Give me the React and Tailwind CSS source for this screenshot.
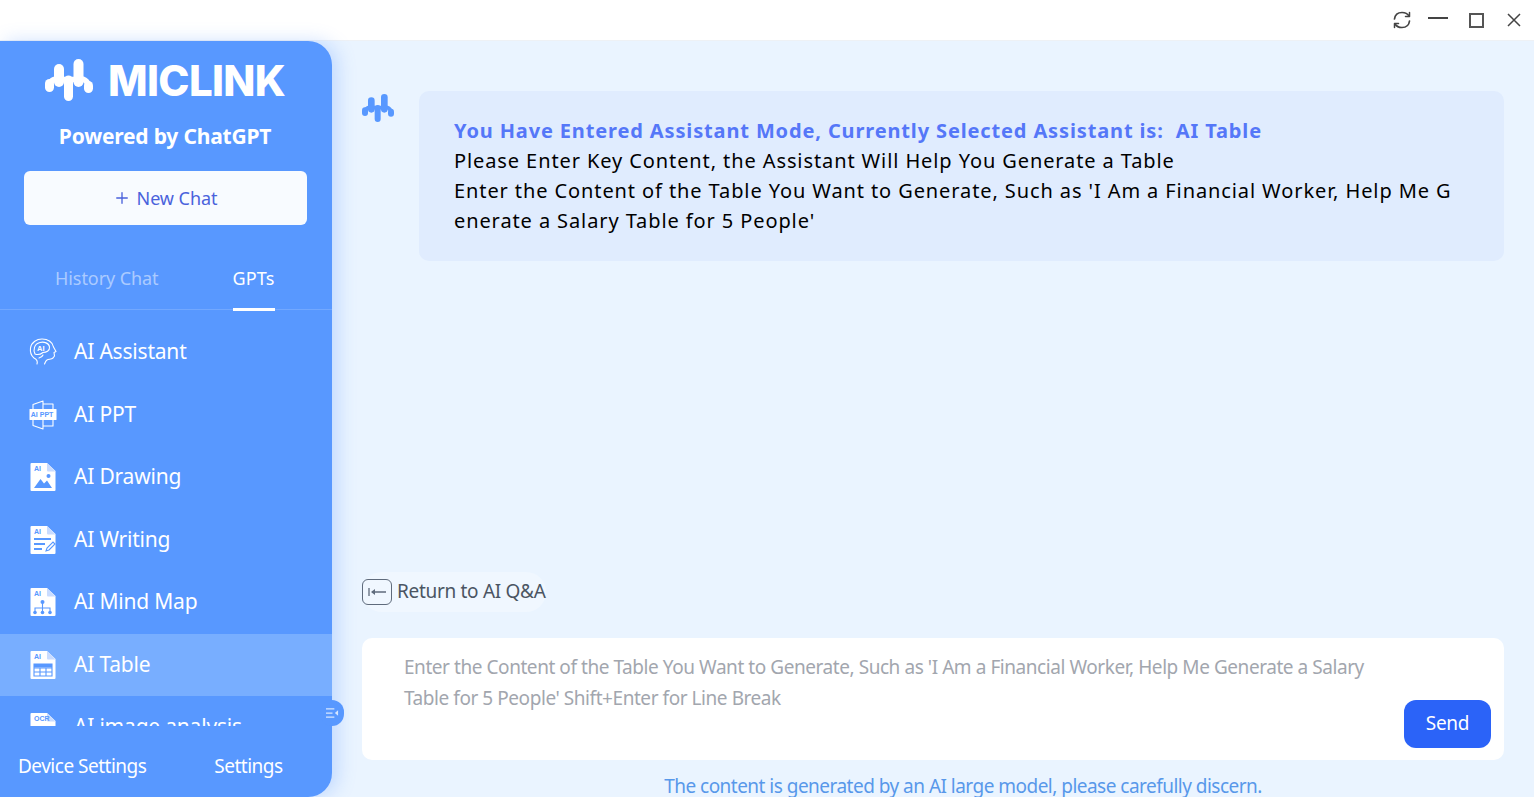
import React from "react";
import { Plus } from "lucide-react";

const F = { fontFamily: '"Noto Sans", "Liberation Sans", sans-serif' };

function Mark({ className, color = "#fff" }) {
  return (
    <svg viewBox="0 0 48 44" className={className} fill="none" stroke={color} strokeLinecap="round" strokeLinejoin="round">
      <path d="M4.500 25.500 V29.500" strokeWidth="9" />
      <path d="M14 11 V24" strokeWidth="10" />
      <path d="M23.500 22 V38.500" strokeWidth="9" />
      <path d="M33.500 6 V24" strokeWidth="10" />
      <path d="M43.500 27.500 V30.500" strokeWidth="9" />
      <path d="M6 23.500 C8 21.500 10 21 12 21 M14 21.500 H34 M36 21 C38 21 41 22 43 25.500" strokeWidth="5.500" />
    </svg>
  );
}

function DocIcon({ children, label = "AI" }) {
  return (
    <svg viewBox="0 0 26 30" className="w-[26px] h-[30px]">
      <path d="M1.500 1 H17 L25.500 9 V28 Q25.500 29 24.500 29 H1.500 Q0.500 29 0.500 28 V2 Q0.500 1 1.500 1Z" fill="#fff" />
      <path d="M17 1 L25.500 9.500 H18 Q17 9.500 17 8.500Z" fill="#c9dcff" />
      <text x="4" y="9" fontSize="7" fontWeight="700" fill="#5898ff" fontFamily="Liberation Sans, sans-serif">{label}</text>
      {children}
    </svg>
  );
}

const icons = {
  assistant: (
    <svg viewBox="0 0 28 28" className="w-[28px] h-[28px]" fill="none" stroke="#fff" strokeWidth="1.100" strokeLinecap="round" strokeLinejoin="round">
      <path d="M8 26 C9 23 8 21.500 5 20 C2 17.500 1 14 1.500 10 C2.500 4 8 1 13 1 C19 1 24 4.500 24.500 9 L27 13.500 L25 14.500 L25.500 18 L24 20 C22.500 21.500 20 21 18 22 C16.500 23 16 25 15.500 26" />
      <path d="M6 16 C4 12 5 6 11 4.500 C15 3.500 20 5 20.500 9 C21 13 17 14.500 14 14.500 C12 16 9.500 17.500 6 16Z" />
      <path d="M10 20 C12 19.500 13.500 18.500 14 17" />
      <text x="8" y="12.500" fontSize="7.500" fontWeight="700" fill="#fff" stroke="none" fontFamily="Liberation Sans, sans-serif">AI</text>
    </svg>
  ),
  ppt: (
    <svg viewBox="0 0 28 30" className="w-[28px] h-[30px]" fill="none" stroke="#fff" strokeWidth="1.100" strokeLinejoin="round">
      <path d="M4 9 V4.500 L14 1 V29 L4 25.500 V20" />
      <path d="M14 4 H24 V9 M24 20 V26 H14" />
      <rect x="0.500" y="9" width="27" height="11" rx="0.500" fill="#fff" stroke="none" />
      <text x="1.800" y="17" fontSize="7" fontWeight="700" fill="#5898ff" stroke="none" fontFamily="Liberation Sans, sans-serif">AI PPT</text>
    </svg>
  ),
  drawing: (
    <DocIcon>
      <path d="M4 26 L10.500 17 L14 21.500 L17 18.500 L22 26Z" fill="#5898ff" />
      <circle cx="18.500" cy="14" r="2" fill="#5898ff" />
    </DocIcon>
  ),
  writing: (
    <DocIcon>
      <path d="M4 14 H21 M4 19 H15 M4 24 H12" stroke="#5898ff" strokeWidth="1.800" />
      <path d="M16 26 L17 23 L23 17 L25 19 L19 25Z" fill="none" stroke="#5898ff" strokeWidth="1.100" />
    </DocIcon>
  ),
  mind: (
    <DocIcon>
      <circle cx="12.500" cy="15" r="2" fill="#5898ff" />
      <path d="M12.500 16 V25 M5 25 V21 H20 V25" stroke="#5898ff" strokeWidth="1.100" fill="none" />
      <circle cx="5" cy="25.500" r="1.800" fill="#5898ff" />
      <circle cx="12.500" cy="25.500" r="1.800" fill="#5898ff" />
      <circle cx="20" cy="25.500" r="1.800" fill="#5898ff" />
    </DocIcon>
  ),
  table: (
    <DocIcon>
      <path d="M4 14 H22 V26 H4Z M4 18 H22 M4 22 H22 M10 18 V26 M16 18 V26" stroke="#5898ff" strokeWidth="1.100" fill="none" />
      <path d="M4 14 H22 V17.500 H4Z" fill="#5898ff" />
    </DocIcon>
  ),
  ocr: (
    <DocIcon label="OCR">
      <circle cx="13" cy="17" r="3" fill="#5898ff" />
    </DocIcon>
  ),
};

const items = [
  ["AI Assistant", icons.assistant],
  ["AI PPT", icons.ppt],
  ["AI Drawing", icons.drawing],
  ["AI Writing", icons.writing],
  ["AI Mind Map", icons.mind],
  ["AI Table", icons.table, true],
  ["AI image analysis", icons.ocr],
];

export default function App() {
  return (
    <div style={F} className="w-full h-[797px] flex flex-col overflow-hidden bg-[#eaf4ff]">
      <header className="h-[41px] shrink-0 bg-white border-b border-[#eef1f5] flex items-center justify-end pr-[13px]">
        <svg viewBox="0 0 20 20" className="w-[20px] h-[20px] mr-[16px]" fill="none" stroke="#444" strokeWidth="1.700" strokeLinecap="round" strokeLinejoin="round">
          <path d="M2.500 9 C3 5 6 2.500 10 2.500 C13 2.500 15.500 3.500 17 6" />
          <path d="M17.500 2.500 V6.500 H13.500" strokeWidth="1.500" />
          <path d="M17.500 11 C17 15 14 17.500 10 17.500 C7 17.500 4.500 16.500 3 14" />
          <path d="M2.500 17.500 V13.500 H6.500" strokeWidth="1.500" />
        </svg>
        <div className="w-[20px] h-[2px] bg-[#444] mb-[4px] mr-[21px]" />
        <div className="w-[15px] h-[15px] border-2 border-[#555] mr-[23px]" />
        <svg viewBox="0 0 14 14" className="w-[14px] h-[14px]" fill="none" stroke="#444" strokeWidth="1.500">
          <path d="M1 1 L13 13 M13 1 L1 13" />
        </svg>
      </header>

      <div className="flex-1 flex min-h-0">
        <aside className="relative w-[332px] shrink-0 flex flex-col bg-[#5898ff] rounded-r-[24px] shadow-[6px_0_18px_rgba(88,152,255,0.28)] text-white">
          <div className="flex items-center h-[78px] shrink-0 pl-[45px]">
            <Mark className="w-[48px] h-[44px]" />
            <span className="ml-[15px] mt-[2px] text-[42px] leading-none font-extrabold tracking-[-0.65px]" style={{ fontFamily: "Inter, sans-serif" }}>MICLINK</span>
          </div>
          <div className="mt-[2px] h-[30px] shrink-0 text-center text-[21px] leading-[30px] font-bold tracking-[-0.2px] pr-[2px]">Powered by ChatGPT</div>
          <button className="ml-[24px] mr-[25px] mt-[20px] h-[54px] shrink-0 rounded-[6px] bg-[#f8fbff] text-[#4a62dc] flex items-center justify-center gap-[6px] text-[18px] tracking-[-0.05px] pr-[1px]">
            <Plus size={18} strokeWidth={1.800} />
            New Chat
          </button>
          <div className="mt-[29px] h-[56px] shrink-0 flex border-b border-[#72a8ff] text-[18px] tracking-[-0.07px]">
            <div className="ml-[55px] text-white/50 leading-[49px]">History Chat</div>
            <div className="ml-[74px] relative leading-[49px] h-[56px] tracking-[0.1px]">
              GPTs
              <div className="absolute left-0 right-0 bottom-[-1px] h-[3px] bg-white" />
            </div>
          </div>
          <div className="mt-[11px] flex-1 min-h-0 overflow-hidden">
            {items.map(([label, icon, active]) => (
              <div key={label} className={`h-[62.5px] flex items-center ${active ? "bg-[#78aeff]" : ""}`}>
                <div className="ml-[29px] w-[28px] flex justify-center">{icon}</div>
                <span className="ml-[17px] mb-[1px] text-[21px] tracking-[-0.2px]">{label}</span>
              </div>
            ))}
          </div>
          <div className="h-[71px] shrink-0 flex text-[19px] tracking-[-0.5px] leading-[80px]">
            <span className="ml-[18px]">Device Settings</span>
            <span className="ml-[68px]">Settings</span>
          </div>
          <div className="absolute right-[-12px] top-[659px] w-[24px] h-[26px] rounded-full bg-[#5898ff] flex items-center justify-end pr-[5px]">
            <svg viewBox="0 0 14 12" className="w-[13px] h-[12px]" fill="#d6e6ff">
              <path d="M0 1 H9 V2.300 H0Z M0 5.400 H7 V6.700 H0Z M0 9.700 H9 V11 H0Z M13 3 V9 L9.500 6Z" />
            </svg>
          </div>
        </aside>

        <main className="flex-1 min-w-0 flex flex-col pl-[30px] pr-[30px]">
          <div className="flex pt-[50px] flex-1 min-h-0">
            <Mark className="w-[32px] h-[30px] mt-[2px] shrink-0" color="#5898ff" />
            <div className="ml-[25px] flex-1 h-[170px] rounded-[10px] bg-[#e0ecfe] pl-[35px] pr-[44px] pt-[25px] text-[20px] leading-[30px] tracking-[0.9px] text-black break-all">
              <div className="font-bold text-[#5577f8] tracking-[0.86px]">You Have Entered Assistant Mode, Currently Selected Assistant is:&nbsp; AI Table</div>
              <div>Please Enter Key Content, the Assistant Will Help You Generate a Table</div>
              <div>Enter the Content of the Table You Want to Generate, Such as 'I Am a Financial Worker, Help Me Generate a Salary Table for 5 People'</div>
            </div>
          </div>
          <div className="h-[40px] w-[184px] shrink-0 rounded-full bg-[#f0f7ff] flex items-center text-[19px] tracking-[-0.3px] text-[#4b5563] mb-[26px] pb-[1px]">
            <span className="w-[30px] h-[26px] rounded-[6px] border-[1.5px] border-[#5f6b7c] flex items-center justify-center mr-[5px] shrink-0">
              <svg viewBox="0 0 18 10" className="w-[18px] h-[10px]" fill="none" stroke="#5f6b7c" strokeWidth="1.300">
                <path d="M1 1 V9 M18 5 H4" />
                <path d="M3 5 L7 2 V8Z" fill="#5f6b7c" stroke="none" />
              </svg>
            </span>
            Return to AI Q&amp;A
          </div>
          <div className="h-[122px] shrink-0 rounded-[10px] bg-white flex justify-between pl-[42px] pr-[13px]">
            <div className="w-[970px] pt-[14px] text-[19px] leading-[31px] tracking-[-0.44px] text-[#a2a6ae]">
              Enter the Content of the Table You Want to Generate, Such as 'I Am a Financial Worker, Help Me Generate a Salary Table for 5 People' Shift+Enter for Line Break
            </div>
            <button className="self-end mb-[12px] w-[87px] h-[48px] rounded-[12px] bg-[#2b63f8] text-white text-[19px] tracking-[-0.3px] pb-[1px]">Send</button>
          </div>
          <div className="h-[37px] pt-[15px] pl-[60px] shrink-0 text-center text-[19px] leading-[22px] tracking-[-0.52px] text-[#5898ea] whitespace-nowrap">The content is generated by an AI large model, please carefully discern.</div>
        </main>
      </div>
    </div>
  );
}
